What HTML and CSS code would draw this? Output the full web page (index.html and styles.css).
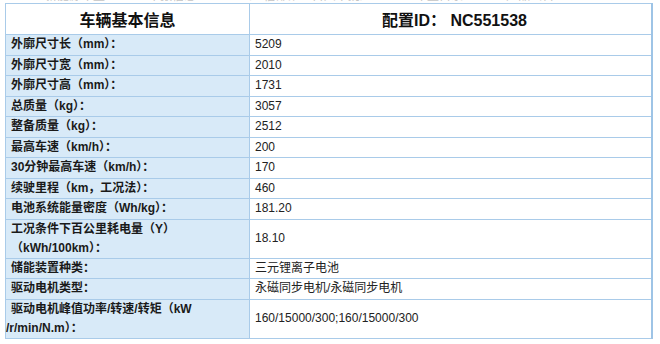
FILE: index.html
```html
<!DOCTYPE html>
<html lang="zh">
<head>
<meta charset="utf-8">
<link rel="stylesheet" href="styles.css">
</head>
<body>
<div class="strip"><span class="strip-text">新能源车型 申报信息 （工信部第三百六十批） 车型目录 产品公告</span></div>
<table class="spec">
  <colgroup><col class="c1"><col class="c2"></colgroup>
  <tr class="head"><th>车辆基本信息</th><th>配置ID： NC551538</th></tr>
  <tr><td class="k">外廓尺寸长（mm）：</td><td class="v">5209</td></tr>
  <tr><td class="k">外廓尺寸宽（mm）：</td><td class="v">2010</td></tr>
  <tr><td class="k">外廓尺寸高（mm）：</td><td class="v">1731</td></tr>
  <tr><td class="k">总质量（kg）：</td><td class="v">3057</td></tr>
  <tr><td class="k">整备质量（kg）：</td><td class="v">2512</td></tr>
  <tr><td class="k">最高车速（km/h）：</td><td class="v">200</td></tr>
  <tr><td class="k">30分钟最高车速（km/h）：</td><td class="v">170</td></tr>
  <tr><td class="k">续驶里程（km，工况法）：</td><td class="v">460</td></tr>
  <tr><td class="k">电池系统能量密度（Wh/kg）：</td><td class="v">181.20</td></tr>
  <tr class="tall"><td class="k">工况条件下百公里耗电量（Y）<br>（kWh/100km）：</td><td class="v">18.10</td></tr>
  <tr><td class="k">储能装置种类：</td><td class="v">三元锂离子电池</td></tr>
  <tr><td class="k">驱动电机类型：</td><td class="v">永磁同步电机/永磁同步电机</td></tr>
  <tr class="tall"><td class="k">驱动电机峰值功率/转速/转矩（kW<br><span class="out">/r/min/N.m）：</span></td><td class="v">160/15000/300;160/15000/300</td></tr>
</table>
</body>
</html>
```

FILE: styles.css
```css
html, body {
  margin: 0;
  padding: 0;
  background: #ffffff;
}
body {
  padding-left: 5px;
  font-family: "Liberation Sans", "Noto Sans CJK SC", sans-serif;
  color: #151515;
}
.strip {
  height: 3px;
  overflow: hidden;
  width: 648px;
}
.strip-text {
  display: block;
  margin-top: -10px;
  padding-left: 40px;
  font-size: 12px;
  line-height: 12px;
  color: #c4c4c4;
  word-spacing: 40px;
  white-space: nowrap;
}
.spec {
  border-collapse: collapse;
  width: 648px;
  table-layout: fixed;
  border-right: 2px solid #9ec4e6;
}
.c1 { width: 244px; }
.spec th, .spec td {
  border: 1px solid #a9cbe9;
  padding: 0;
}
.head th {
  height: 30px;
  font-size: 16px;
  font-weight: bold;
  text-align: center;
  background: #ffffff;
  color: #111;
}
.head th:last-child { padding-left: 8px; }
.spec td {
  height: 19.5px;
  font-size: 12px;
  line-height: 19px;
  vertical-align: middle;
}
.k {
  background: #d8eaf8;
  font-weight: bold;
  padding-left: 5px !important;
  color: #1a1a1a;
}
.v {
  background: #ffffff;
  padding-left: 5px !important;
  color: #222;
}
.tall td { height: 38px; }
.out { margin-left: -5px; }
```
